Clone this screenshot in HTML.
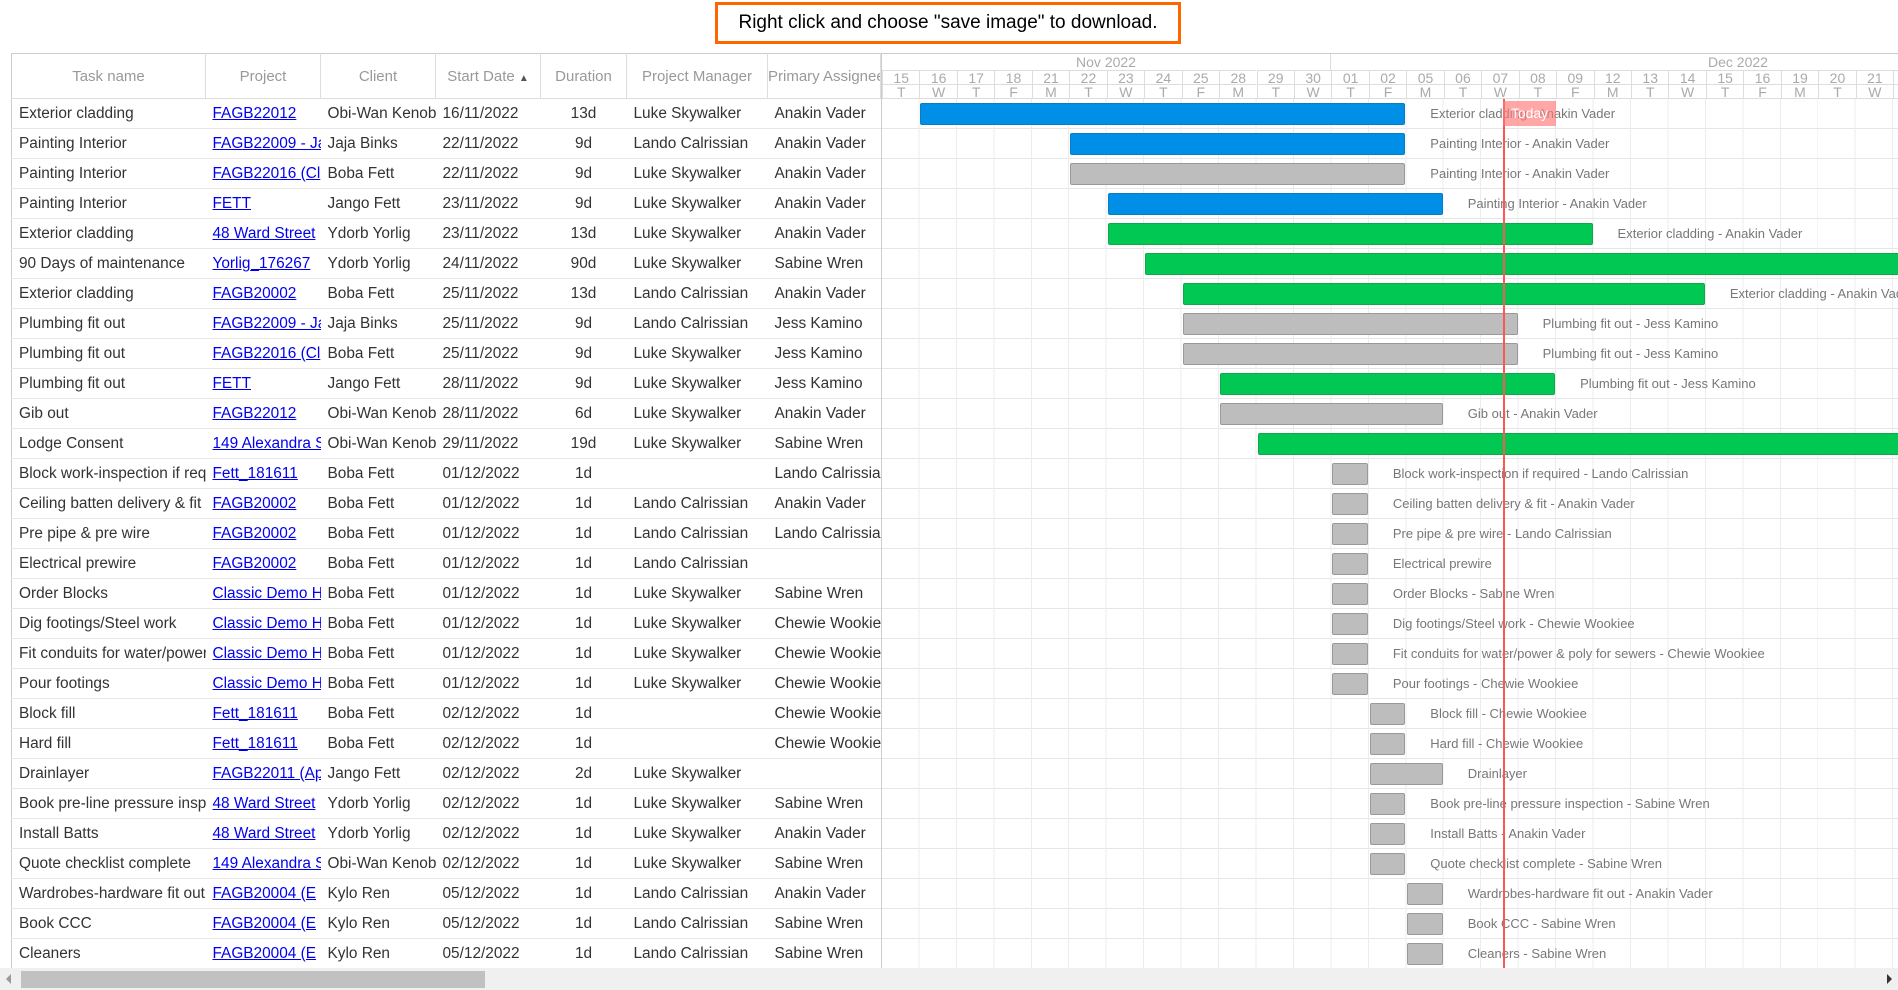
<!DOCTYPE html>
<html><head><meta charset="utf-8"><style>
*{box-sizing:border-box;margin:0;padding:0}
:root{--w:37.45px}
body{width:1898px;height:990px;overflow:hidden;background:#fff;font-family:"Liberation Sans",sans-serif;position:relative}
.save{position:absolute;left:715px;top:2px;width:466px;height:42px;border:3px solid #f60;font-size:19px;line-height:36px;text-align:center;color:#000}
table{position:absolute;left:11px;top:53px;border-collapse:collapse;table-layout:fixed;width:870px;border-left:1px solid #ccc}
th{height:45px;font-weight:normal;color:#999;font-size:15px;border:1px solid #ddd;border-left:none;border-top:1px solid #ccc;white-space:nowrap;overflow:hidden}
td{height:30px;font-size:15.4px;color:#333;border-bottom:1px solid #e6e6e6;white-space:nowrap;overflow:hidden;padding-left:7px}
td.c{text-align:center;padding-left:0}
td a{color:#00e;text-decoration:underline}
#g{position:absolute;left:881px;top:53px;width:1017px;height:915px;overflow:hidden;border-left:1px solid #ccc;border-top:1px solid #ccc}
#gh{position:absolute;left:0;top:0;width:100%;height:45px;border-bottom:1px solid #ddd}
.m{position:absolute;top:0;height:16px;font-size:14px;color:#aaa;line-height:16px}
.dn,.wd{position:absolute;width:var(--w);text-align:center;font-size:14px;color:#aaa;border-left:1px solid #ddd;line-height:14px;left:calc(var(--i)*var(--w))}
.dn{top:16px;height:14px;border-top:1px solid #ddd}
.wd{top:30px;height:14px;border-top:1px solid #ddd}
#gb{position:absolute;left:0;top:45px;width:100%;height:870px;background:repeating-linear-gradient(90deg,transparent 0,transparent 36.45px,#ececec 36.45px,#ececec 37.45px),repeating-linear-gradient(180deg,transparent 0,transparent 29px,#e6e6e6 29px,#e6e6e6 30px)}
.r{position:absolute;left:0;width:100%;height:30px}
.b{position:absolute;top:4px;height:22px;border-radius:2px;left:calc(var(--s)*var(--w) + 1px);width:calc(var(--l)*var(--w) - 2px)}
.bl{background:#008fe6;border:1px solid #0a7cc4}
.gr{background:#00c853;border:1px solid #10a84a}
.gy{background:#bdbdbd;border:1px solid #999}
.lb{position:absolute;top:0;line-height:30px;font-size:13px;color:#777;white-space:nowrap;left:calc((var(--s) + var(--l))*var(--w) + 24px)}
#today{position:absolute;left:621px;top:0;width:2px;height:870px;background:#f55}
#tbox{position:absolute;left:621px;top:2px;width:53px;height:25px;background:rgba(255,120,120,.65);color:#fff;font-size:14px;line-height:25px;text-align:center}
#sb{position:absolute;left:0;top:968px;width:1898px;height:22px;background:#f0f0f0}
#th{position:absolute;left:21px;top:3px;width:464px;height:17px;background:#c1c1c1}
</style></head><body>
<div class="save">Right click and choose "save image" to download.</div>
<table>
<colgroup><col style="width:194px"><col style="width:115px"><col style="width:115px"><col style="width:105px"><col style="width:86px"><col style="width:141px"><col style="width:113px"></colgroup>
<tr><th>Task name</th><th>Project</th><th>Client</th><th>Start Date <span style="font-size:10px;color:#555">&#9650;</span></th><th>Duration</th><th>Project Manager</th><th>Primary Assignee</th></tr>
<tr><td>Exterior cladding</td><td><a>FAGB22012</a></td><td>Obi-Wan Kenobi</td><td>16/11/2022</td><td class="c">13d</td><td>Luke Skywalker</td><td>Anakin Vader</td></tr>
<tr><td>Painting Interior</td><td><a>FAGB22009 - Jaja</a></td><td>Jaja Binks</td><td>22/11/2022</td><td class="c">9d</td><td>Lando Calrissian</td><td>Anakin Vader</td></tr>
<tr><td>Painting Interior</td><td><a>FAGB22016 (Cl</a></td><td>Boba Fett</td><td>22/11/2022</td><td class="c">9d</td><td>Luke Skywalker</td><td>Anakin Vader</td></tr>
<tr><td>Painting Interior</td><td><a>FETT</a></td><td>Jango Fett</td><td>23/11/2022</td><td class="c">9d</td><td>Luke Skywalker</td><td>Anakin Vader</td></tr>
<tr><td>Exterior cladding</td><td><a>48 Ward Street</a></td><td>Ydorb Yorlig</td><td>23/11/2022</td><td class="c">13d</td><td>Luke Skywalker</td><td>Anakin Vader</td></tr>
<tr><td>90 Days of maintenance</td><td><a>Yorlig_176267</a></td><td>Ydorb Yorlig</td><td>24/11/2022</td><td class="c">90d</td><td>Luke Skywalker</td><td>Sabine Wren</td></tr>
<tr><td>Exterior cladding</td><td><a>FAGB20002</a></td><td>Boba Fett</td><td>25/11/2022</td><td class="c">13d</td><td>Lando Calrissian</td><td>Anakin Vader</td></tr>
<tr><td>Plumbing fit out</td><td><a>FAGB22009 - Jaja</a></td><td>Jaja Binks</td><td>25/11/2022</td><td class="c">9d</td><td>Lando Calrissian</td><td>Jess Kamino</td></tr>
<tr><td>Plumbing fit out</td><td><a>FAGB22016 (Cl</a></td><td>Boba Fett</td><td>25/11/2022</td><td class="c">9d</td><td>Luke Skywalker</td><td>Jess Kamino</td></tr>
<tr><td>Plumbing fit out</td><td><a>FETT</a></td><td>Jango Fett</td><td>28/11/2022</td><td class="c">9d</td><td>Luke Skywalker</td><td>Jess Kamino</td></tr>
<tr><td>Gib out</td><td><a>FAGB22012</a></td><td>Obi-Wan Kenobi</td><td>28/11/2022</td><td class="c">6d</td><td>Luke Skywalker</td><td>Anakin Vader</td></tr>
<tr><td>Lodge Consent</td><td><a>149 Alexandra St</a></td><td>Obi-Wan Kenobi</td><td>29/11/2022</td><td class="c">19d</td><td>Luke Skywalker</td><td>Sabine Wren</td></tr>
<tr><td>Block work-inspection if required</td><td><a>Fett_181611</a></td><td>Boba Fett</td><td>01/12/2022</td><td class="c">1d</td><td></td><td>Lando Calrissian</td></tr>
<tr><td>Ceiling batten delivery &amp; fit</td><td><a>FAGB20002</a></td><td>Boba Fett</td><td>01/12/2022</td><td class="c">1d</td><td>Lando Calrissian</td><td>Anakin Vader</td></tr>
<tr><td>Pre pipe &amp; pre wire</td><td><a>FAGB20002</a></td><td>Boba Fett</td><td>01/12/2022</td><td class="c">1d</td><td>Lando Calrissian</td><td>Lando Calrissian</td></tr>
<tr><td>Electrical prewire</td><td><a>FAGB20002</a></td><td>Boba Fett</td><td>01/12/2022</td><td class="c">1d</td><td>Lando Calrissian</td><td></td></tr>
<tr><td>Order Blocks</td><td><a>Classic Demo Ho</a></td><td>Boba Fett</td><td>01/12/2022</td><td class="c">1d</td><td>Luke Skywalker</td><td>Sabine Wren</td></tr>
<tr><td>Dig footings/Steel work</td><td><a>Classic Demo Ho</a></td><td>Boba Fett</td><td>01/12/2022</td><td class="c">1d</td><td>Luke Skywalker</td><td>Chewie Wookiee</td></tr>
<tr><td>Fit conduits for water/power</td><td><a>Classic Demo Ho</a></td><td>Boba Fett</td><td>01/12/2022</td><td class="c">1d</td><td>Luke Skywalker</td><td>Chewie Wookiee</td></tr>
<tr><td>Pour footings</td><td><a>Classic Demo Ho</a></td><td>Boba Fett</td><td>01/12/2022</td><td class="c">1d</td><td>Luke Skywalker</td><td>Chewie Wookiee</td></tr>
<tr><td>Block fill</td><td><a>Fett_181611</a></td><td>Boba Fett</td><td>02/12/2022</td><td class="c">1d</td><td></td><td>Chewie Wookiee</td></tr>
<tr><td>Hard fill</td><td><a>Fett_181611</a></td><td>Boba Fett</td><td>02/12/2022</td><td class="c">1d</td><td></td><td>Chewie Wookiee</td></tr>
<tr><td>Drainlayer</td><td><a>FAGB22011 (Ap</a></td><td>Jango Fett</td><td>02/12/2022</td><td class="c">2d</td><td>Luke Skywalker</td><td></td></tr>
<tr><td>Book pre-line pressure inspection</td><td><a>48 Ward Street</a></td><td>Ydorb Yorlig</td><td>02/12/2022</td><td class="c">1d</td><td>Luke Skywalker</td><td>Sabine Wren</td></tr>
<tr><td>Install Batts</td><td><a>48 Ward Street</a></td><td>Ydorb Yorlig</td><td>02/12/2022</td><td class="c">1d</td><td>Luke Skywalker</td><td>Anakin Vader</td></tr>
<tr><td>Quote checklist complete</td><td><a>149 Alexandra St</a></td><td>Obi-Wan Kenobi</td><td>02/12/2022</td><td class="c">1d</td><td>Luke Skywalker</td><td>Sabine Wren</td></tr>
<tr><td>Wardrobes-hardware fit out</td><td><a>FAGB20004 (E</a></td><td>Kylo Ren</td><td>05/12/2022</td><td class="c">1d</td><td>Lando Calrissian</td><td>Anakin Vader</td></tr>
<tr><td>Book CCC</td><td><a>FAGB20004 (E</a></td><td>Kylo Ren</td><td>05/12/2022</td><td class="c">1d</td><td>Lando Calrissian</td><td>Sabine Wren</td></tr>
<tr><td>Cleaners</td><td><a>FAGB20004 (E</a></td><td>Kylo Ren</td><td>05/12/2022</td><td class="c">1d</td><td>Lando Calrissian</td><td>Sabine Wren</td></tr>
</table>
<div id="g">
<div id="gh">
<div class="m" style="left:0;width:449px;text-align:center;border-right:1px solid #ddd">Nov 2022</div>
<div class="m" style="left:826px">Dec 2022</div>
<div class="dn" style="--i:0">15</div><div class="wd" style="--i:0">T</div>
<div class="dn" style="--i:1">16</div><div class="wd" style="--i:1">W</div>
<div class="dn" style="--i:2">17</div><div class="wd" style="--i:2">T</div>
<div class="dn" style="--i:3">18</div><div class="wd" style="--i:3">F</div>
<div class="dn" style="--i:4">21</div><div class="wd" style="--i:4">M</div>
<div class="dn" style="--i:5">22</div><div class="wd" style="--i:5">T</div>
<div class="dn" style="--i:6">23</div><div class="wd" style="--i:6">W</div>
<div class="dn" style="--i:7">24</div><div class="wd" style="--i:7">T</div>
<div class="dn" style="--i:8">25</div><div class="wd" style="--i:8">F</div>
<div class="dn" style="--i:9">28</div><div class="wd" style="--i:9">M</div>
<div class="dn" style="--i:10">29</div><div class="wd" style="--i:10">T</div>
<div class="dn" style="--i:11">30</div><div class="wd" style="--i:11">W</div>
<div class="dn" style="--i:12">01</div><div class="wd" style="--i:12">T</div>
<div class="dn" style="--i:13">02</div><div class="wd" style="--i:13">F</div>
<div class="dn" style="--i:14">05</div><div class="wd" style="--i:14">M</div>
<div class="dn" style="--i:15">06</div><div class="wd" style="--i:15">T</div>
<div class="dn" style="--i:16">07</div><div class="wd" style="--i:16">W</div>
<div class="dn" style="--i:17">08</div><div class="wd" style="--i:17">T</div>
<div class="dn" style="--i:18">09</div><div class="wd" style="--i:18">F</div>
<div class="dn" style="--i:19">12</div><div class="wd" style="--i:19">M</div>
<div class="dn" style="--i:20">13</div><div class="wd" style="--i:20">T</div>
<div class="dn" style="--i:21">14</div><div class="wd" style="--i:21">W</div>
<div class="dn" style="--i:22">15</div><div class="wd" style="--i:22">T</div>
<div class="dn" style="--i:23">16</div><div class="wd" style="--i:23">F</div>
<div class="dn" style="--i:24">19</div><div class="wd" style="--i:24">M</div>
<div class="dn" style="--i:25">20</div><div class="wd" style="--i:25">T</div>
<div class="dn" style="--i:26">21</div><div class="wd" style="--i:26">W</div>
<div class="dn" style="--i:27">22</div><div class="wd" style="--i:27">T</div>
</div>
<div id="gb">
<div class="r" style="top:0;--s:1;--l:13"><div class="b bl"></div><div class="lb">Exterior cladding - Anakin Vader</div></div>
<div class="r" style="top:30px;--s:5;--l:9"><div class="b bl"></div><div class="lb">Painting Interior - Anakin Vader</div></div>
<div class="r" style="top:60px;--s:5;--l:9"><div class="b gy"></div><div class="lb">Painting Interior - Anakin Vader</div></div>
<div class="r" style="top:90px;--s:6;--l:9"><div class="b bl"></div><div class="lb">Painting Interior - Anakin Vader</div></div>
<div class="r" style="top:120px;--s:6;--l:13"><div class="b gr"></div><div class="lb">Exterior cladding - Anakin Vader</div></div>
<div class="r" style="top:150px;--s:7;--l:22"><div class="b gr"></div></div>
<div class="r" style="top:180px;--s:8;--l:14"><div class="b gr"></div><div class="lb">Exterior cladding - Anakin Vader</div></div>
<div class="r" style="top:210px;--s:8;--l:9"><div class="b gy"></div><div class="lb">Plumbing fit out - Jess Kamino</div></div>
<div class="r" style="top:240px;--s:8;--l:9"><div class="b gy"></div><div class="lb">Plumbing fit out - Jess Kamino</div></div>
<div class="r" style="top:270px;--s:9;--l:9"><div class="b gr"></div><div class="lb">Plumbing fit out - Jess Kamino</div></div>
<div class="r" style="top:300px;--s:9;--l:6"><div class="b gy"></div><div class="lb">Gib out - Anakin Vader</div></div>
<div class="r" style="top:330px;--s:10;--l:19"><div class="b gr"></div></div>
<div class="r" style="top:360px;--s:12;--l:1"><div class="b gy"></div><div class="lb">Block work-inspection if required - Lando Calrissian</div></div>
<div class="r" style="top:390px;--s:12;--l:1"><div class="b gy"></div><div class="lb">Ceiling batten delivery &amp; fit - Anakin Vader</div></div>
<div class="r" style="top:420px;--s:12;--l:1"><div class="b gy"></div><div class="lb">Pre pipe &amp; pre wire - Lando Calrissian</div></div>
<div class="r" style="top:450px;--s:12;--l:1"><div class="b gy"></div><div class="lb">Electrical prewire</div></div>
<div class="r" style="top:480px;--s:12;--l:1"><div class="b gy"></div><div class="lb">Order Blocks - Sabine Wren</div></div>
<div class="r" style="top:510px;--s:12;--l:1"><div class="b gy"></div><div class="lb">Dig footings/Steel work - Chewie Wookiee</div></div>
<div class="r" style="top:540px;--s:12;--l:1"><div class="b gy"></div><div class="lb">Fit conduits for water/power &amp; poly for sewers - Chewie Wookiee</div></div>
<div class="r" style="top:570px;--s:12;--l:1"><div class="b gy"></div><div class="lb">Pour footings - Chewie Wookiee</div></div>
<div class="r" style="top:600px;--s:13;--l:1"><div class="b gy"></div><div class="lb">Block fill - Chewie Wookiee</div></div>
<div class="r" style="top:630px;--s:13;--l:1"><div class="b gy"></div><div class="lb">Hard fill - Chewie Wookiee</div></div>
<div class="r" style="top:660px;--s:13;--l:2"><div class="b gy"></div><div class="lb">Drainlayer</div></div>
<div class="r" style="top:690px;--s:13;--l:1"><div class="b gy"></div><div class="lb">Book pre-line pressure inspection - Sabine Wren</div></div>
<div class="r" style="top:720px;--s:13;--l:1"><div class="b gy"></div><div class="lb">Install Batts - Anakin Vader</div></div>
<div class="r" style="top:750px;--s:13;--l:1"><div class="b gy"></div><div class="lb">Quote checklist complete - Sabine Wren</div></div>
<div class="r" style="top:780px;--s:14;--l:1"><div class="b gy"></div><div class="lb">Wardrobes-hardware fit out - Anakin Vader</div></div>
<div class="r" style="top:810px;--s:14;--l:1"><div class="b gy"></div><div class="lb">Book CCC - Sabine Wren</div></div>
<div class="r" style="top:840px;--s:14;--l:1"><div class="b gy"></div><div class="lb">Cleaners - Sabine Wren</div></div>
<div id="today"></div>
<div id="tbox">Today</div>
</div>
</div>
<div id="sb"><div id="th"></div>
<div style="position:absolute;left:6px;top:6px;width:0;height:0;border-top:5px solid transparent;border-bottom:5px solid transparent;border-right:5px solid #999"></div>
<div style="position:absolute;right:6px;top:6px;width:0;height:0;border-top:5px solid transparent;border-bottom:5px solid transparent;border-left:5px solid #333"></div>
</div>
</body></html>
